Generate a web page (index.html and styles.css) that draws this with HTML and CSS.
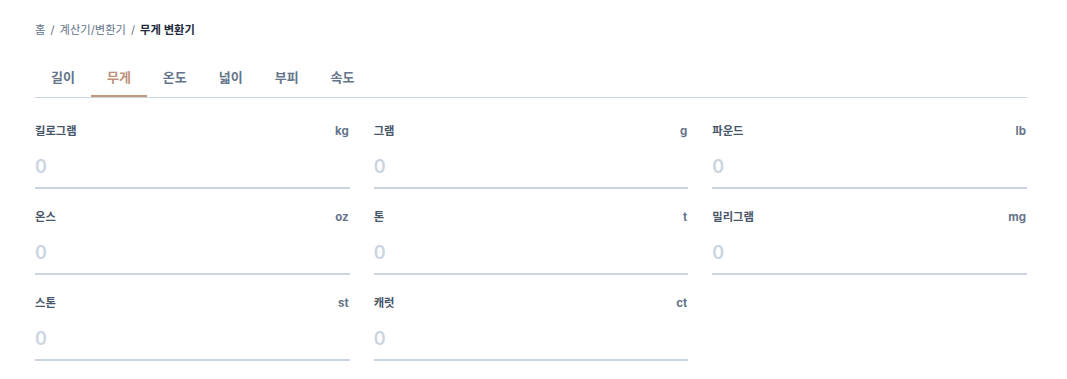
FILE: index.html
```html
<!DOCTYPE html>
<html lang="ko">
<head>
    <meta charset="UTF-8">
    <meta name="viewport" content="width=device-width, initial-scale=1.0">
    <title>무게 변환기</title>
    <link rel="stylesheet" href="styles.css">
</head>
<body>
    <div class="contenedor">
        <nav class="migas">
            <a href="#">홈</a>
            <span class="sep">/</span>
            <a href="#">계산기/변환기</a>
            <span class="sep">/</span>
            <span class="actual">무게 변환기</span>
        </nav>

        <div class="pestanas">
            <button>길이</button>
            <button class="activa">무게</button>
            <button>온도</button>
            <button>넓이</button>
            <button>부피</button>
            <button>속도</button>
        </div>

        <form class="campos">
            <div class="campo">
                <label for="kg"><span>킬로그램</span><span class="unidad">kg</span></label>
                <input class="captura" id="kg" type="text" placeholder="0">
            </div>
            <div class="campo">
                <label for="g"><span>그램</span><span class="unidad">g</span></label>
                <input class="captura" id="g" type="text" placeholder="0">
            </div>
            <div class="campo">
                <label for="lb"><span>파운드</span><span class="unidad">lb</span></label>
                <input class="captura" id="lb" type="text" placeholder="0">
            </div>
            <div class="campo">
                <label for="oz"><span>온스</span><span class="unidad">oz</span></label>
                <input class="captura" id="oz" type="text" placeholder="0">
            </div>
            <div class="campo">
                <label for="t"><span>톤</span><span class="unidad">t</span></label>
                <input class="captura" id="t" type="text" placeholder="0">
            </div>
            <div class="campo">
                <label for="mg"><span>밀리그램</span><span class="unidad">mg</span></label>
                <input class="captura" id="mg" type="text" placeholder="0">
            </div>
            <div class="campo">
                <label for="st"><span>스톤</span><span class="unidad">st</span></label>
                <input class="captura" id="st" type="text" placeholder="0">
            </div>
            <div class="campo">
                <label for="ct"><span>캐럿</span><span class="unidad">ct</span></label>
                <input class="captura" id="ct" type="text" placeholder="0">
            </div>
        </form>
    </div>
</body>
</html>
```

FILE: styles.css
```css
/* Estilos globales */
* {
    box-sizing: border-box;
    margin: 0;
    padding: 0;
}

body {
    font-family: Inter, "Noto Sans CJK KR", sans-serif;
    background-color: #fff;
    color: #334155;
}

.contenedor {
    width: 992px;
    margin-left: 35px;
    padding-top: 20px;
}

/* Migas de pan */
.migas {
    display: flex;
    gap: 5px;
    font-size: 11.3px;
    line-height: 20px;
    color: #64748b;
}

.migas a {
    color: #64748b;
    text-decoration: none;
}

.migas .actual {
    color: #1e293b;
    font-weight: 600;
}

/* Pestañas */
.pestanas {
    display: flex;
    margin-top: 17px;
    border-bottom: 1px solid #cbd5e1;
}

.pestanas button {
    font-family: inherit;
    font-size: 13px;
    font-weight: 600;
    line-height: 20px;
    padding: 10px 16px 8px;
    background: none;
    border: none;
    border-bottom: 2px solid transparent;
    color: #64748b;
    cursor: pointer;
}

.pestanas button.activa {
    color: #c0917a;
    border-bottom-color: #c4987f;
}

/* Campos */
.campos {
    display: grid;
    grid-template-columns: repeat(3, 1fr);
    column-gap: 24px;
    row-gap: 19px;
    margin-top: 24px;
}

.campo {
    display: flex;
    flex-direction: column;
}

.campo label {
    display: flex;
    justify-content: space-between;
    font-size: 11.3px;
    font-weight: 600;
    line-height: 18px;
    color: #475569;
    margin-bottom: 5px;
}

.campo .unidad {
    font-size: 11.5px;
    font-weight: 700;
    color: #64748b;
    margin-right: 1px;
}

.captura {
    height: 44px;
    border: none;
    border-bottom: 2px solid #cbd5e1;
    font-family: inherit;
    font-size: 18px;
    font-weight: 600;
    color: #334155;
    outline: none;
    background: transparent;
}

.captura::placeholder {
    color: #cbd5e1;
}
```
